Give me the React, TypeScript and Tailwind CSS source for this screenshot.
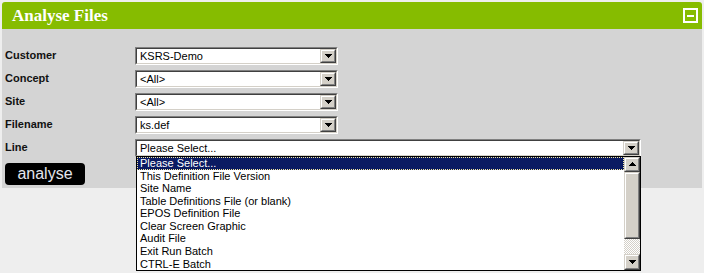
import React from 'react';

const sans = { fontFamily: '"Liberation Sans", Arial, sans-serif' };

function Arrow({ up = false }: { up?: boolean }) {
    return (
        <svg width="7" height="4" viewBox="0 0 7 4" shapeRendering="crispEdges">
            <polygon points={up ? '0,4 7,4 3.5,0' : '0,0 7,0 3.5,4'} fill="#000" />
        </svg>
    );
}

function Raised({ className, children }: { className: string; children?: React.ReactNode }) {
    return (
        <div className={`border border-t-[#d4d0c8] border-l-[#d4d0c8] border-b-[#404040] border-r-[#404040] bg-[#d4d0c8] ${className}`}>
            <div className="flex h-full w-full items-center justify-center border border-t-white border-l-white border-b-[#808080] border-r-[#808080]">
                {children}
            </div>
        </div>
    );
}

function Select({ value, wide = false }: { value: string; wide?: boolean }) {
    return (
        <div
            className={`h-[18px] border border-t-[#808080] border-l-[#808080] border-b-white border-r-white ${
                wide ? 'w-[506px]' : 'w-[203px]'
            }`}
        >
            <div className="flex h-full border border-t-[#404040] border-l-[#404040] border-b-[#d4d0c8] border-r-[#d4d0c8] bg-white">
                <div className="flex-1 pl-[3px] text-[11px] leading-[14px] text-black" style={sans}>
                    {value}
                </div>
                <Raised className="h-[14px] w-[16px]">
                    <Arrow />
                </Raised>
            </div>
        </div>
    );
}

const lineOptions = [
    'Please Select...',
    'This Definition File Version',
    'Site Name',
    'Table Definitions File (or blank)',
    'EPOS Definition File',
    'Clear Screen Graphic',
    'Audit File',
    'Exit Run Batch',
    'CTRL-E Batch',
];

function LineList() {
    return (
        <div className="absolute left-[1px] top-[17px] z-10 flex h-[115px] w-[505px] overflow-hidden border border-black bg-white">
            <div className="flex-1" style={sans}>
                {lineOptions.map((o, i) => (
                    <div
                        key={o}
                        className={
                            i === 0
                                ? 'h-[13px] border border-dotted border-[#f5e9a0] bg-[#0a1a62] pl-[2px] text-[11px] leading-[11px] text-white'
                                : 'h-[12.6px] pl-[3px] text-[11px] leading-[12.6px] text-black'
                        }
                    >
                        {o}
                    </div>
                ))}
            </div>
            <div className="flex w-[16px] flex-col">
                <Raised className="h-[15px] w-[16px]">
                    <Arrow up />
                </Raised>
                <Raised className="h-[67px] w-[16px]" />
                <div className="flex-1 bg-[repeating-conic-gradient(#d4d0c8_0_25%,#ffffff_0_50%)] bg-[length:2px_2px]" />
                <Raised className="h-[16px] w-[16px]">
                    <Arrow />
                </Raised>
            </div>
        </div>
    );
}

const rows = ['Customer', 'Concept', 'Site', 'Filename'];
const values = ['KSRS-Demo', '<All>', '<All>', 'ks.def'];

export default function App() {
    return (
        <div className="relative h-[273px] w-[704px] overflow-hidden bg-[#eeeeee] px-[2px] pt-[2px]">
            <div className="w-[700px]">
                <div className="flex h-[27px] items-center justify-between rounded-t-[3px] bg-[#86bc00] pl-[10px] pr-[4px]">
                    <span
                        className="text-[17px] font-bold leading-none text-white"
                        style={{ fontFamily: '"Liberation Serif", "Times New Roman", serif' }}
                    >
                        Analyse Files
                    </span>
                    <div className="flex h-[15px] w-[15px] items-center justify-center border-2 border-white">
                        <div className="h-[2px] w-[7px] bg-white" />
                    </div>
                </div>
                <div className="bg-[#d4d4d4] pb-[3px] pl-[3px] pt-[15px]" style={sans}>
                    {rows.map((r, i) => (
                        <div key={r} className="flex h-[23px] items-center">
                            <div className="w-[130px] text-[11px] font-bold text-[#111]">{r}</div>
                            <Select value={values[i]} />
                        </div>
                    ))}
                    <div className="flex h-[23px] items-center">
                        <div className="w-[130px] text-[11px] font-bold text-[#111]">Line</div>
                        <div className="relative">
                            <Select value="Please Select..." wide />
                            <LineList />
                        </div>
                    </div>
                    <button className="mt-[4px] flex h-[22px] w-[80px] items-center justify-center rounded-[4px] bg-black text-[16px] leading-none text-[#e4e6ee]">
                        analyse
                    </button>
                </div>
            </div>
        </div>
    );
}
